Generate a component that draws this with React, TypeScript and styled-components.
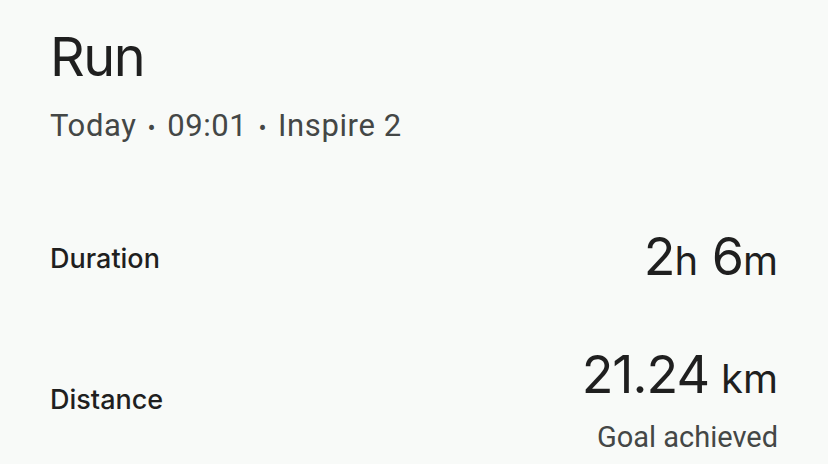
import styled, { createGlobalStyle } from 'styled-components';

const GlobalStyle = createGlobalStyle`
  html, body {
    margin: 0;
    padding: 0;
    background: #f8faf8;
  }
  body {
    font-family: Inter, "Open Sans", sans-serif;
    color: #1f1f1f;
  }
`;

type StatType = {
  label: string;
  value: string;
  unit: string;
  note?: string;
};

const stats: StatType[] = [
  { label: 'Duration', value: '2h 6m', unit: '' },
  { label: 'Distance', value: '21.24', unit: 'km', note: 'Goal achieved' },
];

const meta = ['Today', '09:01', 'Inspire 2'];

const StatRow = (props: { data: StatType }) => {
  const parts = props.data.value.split(' ');
  return (
    <StyledStatRow>
      <Label>{props.data.label}</Label>
      <ValueBox>
        <Value>
          {props.data.unit
            ? (
              <>
                {props.data.value}
                <Unit $gap>{props.data.unit}</Unit>
              </>
            )
            : parts.map((p, i) => (
              <span key={i}>
                {i > 0 && ' '}
                {p.slice(0, -1)}
                <Unit>{p.slice(-1)}</Unit>
              </span>
            ))}
        </Value>
        {props.data.note && <Note>{props.data.note}</Note>}
      </ValueBox>
    </StyledStatRow>
  );
};

export default function App() {
  return (
    <>
      <GlobalStyle />
      <Page>
        <Header>
          <Title>Run</Title>
          <Meta>
            {meta.map((m, i) => (
              <span key={m}>
                {i > 0 && <Dot>•</Dot>}
                {m}
              </span>
            ))}
          </Meta>
        </Header>
        <Stats>
          {stats.map((s) => (
            <StatRow key={s.label} data={s} />
          ))}
        </Stats>
      </Page>
    </>
  );
}

const Page = styled.div`
  width: 828px;
  height: 464px;
  box-sizing: border-box;
  padding: 24px 50px 0;
  overflow: hidden;
`;

const Header = styled.div`
  display: flex;
  flex-direction: column;
  row-gap: 18px;
`;

const Title = styled.h1`
  margin: 0;
  font-weight: 400;
  font-size: 54px;
  line-height: 66px;
  letter-spacing: -1.5px;
`;

const Meta = styled.div`
  font-family: Roboto, sans-serif;
  font-size: 31px;
  line-height: 36px;
  letter-spacing: 0.6px;
  color: #444746;
  white-space: nowrap;
`;

const Dot = styled.span`
  display: inline-block;
  margin: 0 11px;
  font-size: 24px;
`;

const Stats = styled.div`
  display: flex;
  flex-direction: column;
  row-gap: 58px;
  margin-top: 83px;
`;

const StyledStatRow = styled.div`
  display: flex;
  justify-content: space-between;
  align-items: center;
`;

const Label = styled.span`
  font-weight: 500;
  font-size: 27px;
  line-height: 30px;
`;

const ValueBox = styled.div`
  display: flex;
  flex-direction: column;
  align-items: flex-end;
  row-gap: 15px;
`;

const Value = styled.div`
  font-size: 52px;
  line-height: 56px;
  letter-spacing: -1px;
`;

const Unit = styled.span<{ $gap?: boolean }>`
  font-size: 40px;
  letter-spacing: 0;
  margin-left: ${(p) => (p.$gap ? '12px' : '0')};
`;

const Note = styled.div`
  font-family: Roboto, sans-serif;
  font-size: 29px;
  line-height: 30px;
  color: #444746;
`;
